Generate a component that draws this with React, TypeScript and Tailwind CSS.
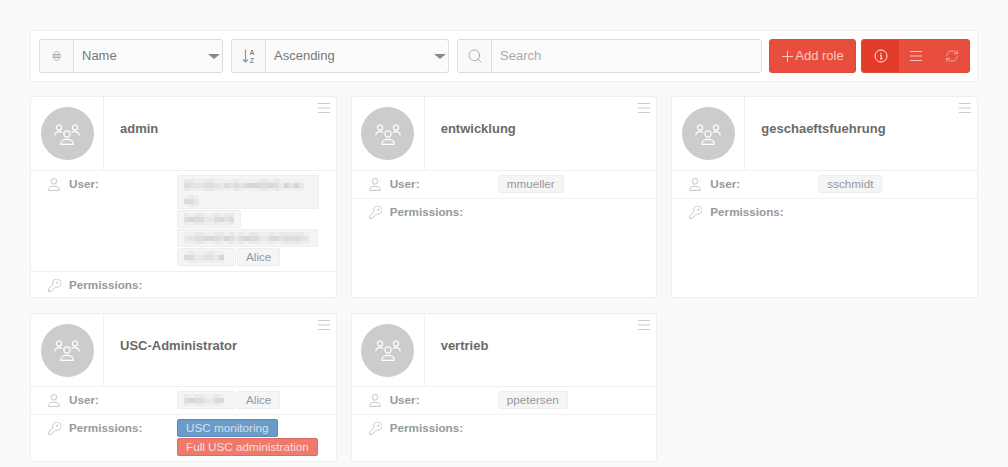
import type { ReactNode } from "react";
import { RefreshCw, Search } from "lucide-react";

interface Role {
  name: string;
  users: { label?: string; blur?: [number, number]; tall?: boolean }[];
  perms?: { label: string; tone: "blue" | "red" }[];
}

const ROLES: Role[] = [
  {
    name: "admin",
    users: [
      { blur: [142, 120], tall: true },
      { blur: [64, 50] },
      { blur: [141, 125] },
      { blur: [59, 44] },
      { label: "Alice" },
    ],
  },
  { name: "entwicklung", users: [{ label: "mmueller" }] },
  { name: "geschaeftsfuehrung", users: [{ label: "sschmidt" }] },
  {
    name: "USC-Administrator",
    users: [{ blur: [59, 44] }, { label: "Alice" }],
    perms: [
      { label: "USC monitoring", tone: "blue" },
      { label: "Full USC administration", tone: "red" },
    ],
  },
  { name: "vertrieb", users: [{ label: "ppetersen" }] },
];

// pixelated redaction bars, the source screenshot has blurred usernames here
function Pixels({ width, seed }: { width: number; seed: number }) {
  const cells = Math.floor(width / 5);
  const rects = [];
  for (let i = 0; i < cells; i++) {
    const v = (i * 37 + seed * 13 + (i * i) % 11) % 7;
    const mid = ["#dcdcdc", "#e4e4e4", "#d6d6d6", "#e2e2e2", "#dadada", "#e8e8e8", "#dedede"][v];
    const edge = v % 3 === 0 ? "#e9e9e9" : "#f0f0f0";
    rects.push(<rect key={`a${i}`} x={i * 5} y={0} width={5} height={4} fill={edge} />);
    rects.push(<rect key={`b${i}`} x={i * 5} y={4} width={5} height={5} fill={mid} />);
    rects.push(<rect key={`c${i}`} x={i * 5} y={9} width={5} height={3} fill={v % 2 ? "#eeeeee" : edge} />);
  }
  return (
    <svg width={cells * 5} height={12} className="block">
      {rects}
    </svg>
  );
}

function Blurred({ outer, inner, tall, seed }: { outer: number; inner: number; tall?: boolean; seed: number }) {
  return (
    <span
      className={`mr-px mb-px flex flex-col gap-1 rounded-[2px] border border-[#eeeeee] bg-[#f5f5f5] pl-[6px] ${tall ? "h-[34px] pt-[3px]" : "h-[18px] pt-[2px]"}`}
      style={{ width: outer }}
    >
      <Pixels width={inner} seed={seed} />
      {tall && <Pixels width={15} seed={seed + 3} />}
    </span>
  );
}

function Tag({ children }: { children: ReactNode }) {
  return (
    <span className="mr-px mb-px flex h-[18px] items-center rounded-[2px] border border-[#eeeeee] bg-[#f5f5f5] px-2 text-[11.7px] text-[#999999]">
      {children}
    </span>
  );
}

function Bars({ className }: { className: string }) {
  return (
    <svg width="12" height="10" viewBox="0 0 12 10" stroke="currentColor" strokeWidth="1" className={className}>
      <path d="M0 .5h12M0 5h12M0 9.500h12" />
    </svg>
  );
}

function GroupIcon() {
  return (
    <svg width="26" height="21" viewBox="0 0 26 21" fill="none" stroke="#ffffff" strokeWidth="1.200">
      <circle cx="13" cy="10" r="3.100" />
      <path d="M7 20.400h12v-1c0-2.500-2.700-4-6-4s-6 1.500-6 4z" />
      <circle cx="5" cy="3.500" r="2.600" />
      <circle cx="21" cy="3.500" r="2.600" />
      <path d="M.7 11.500c0-2.300 1.900-3.900 4.300-3.900 1.200 0 2.300.3 3.200 1" />
      <path d="M25.300 11.500c0-2.300-1.900-3.900-4.300-3.900-1.200 0-2.300.3-3.200 1" />
    </svg>
  );
}

function UserIcon() {
  return (
    <svg width="12" height="13" viewBox="0 0 12 13" fill="none" stroke="#c0c0c0" strokeWidth="0.9">
      <circle cx="6" cy="3.300" r="2.800" />
      <path d="M.7 12.400h10.600v-1c0-1.900-2.300-3.200-5.300-3.200S.7 9.500.7 11.400z" />
    </svg>
  );
}

function KeyIcon() {
  return (
    <svg width="13" height="13" viewBox="0 0 13 13" fill="none" stroke="#c0c0c0" strokeWidth="0.9">
      <path d="M5 5.800A4.200 4.200 0 1 1 7.300 8L3.100 12.400H.6V9.900z" />
      <circle cx="9.200" cy="3.700" r=".7" />
    </svg>
  );
}

function RoleCard({ role, index }: { role: Role; index: number }) {
  return (
    <div className="flex flex-col rounded-[3px] border border-[#eeeeee] bg-white">
      <div className={`relative flex shrink-0 border-b border-[#f0f0f0] ${index < 3 ? "h-[74px]" : "h-[73px]"}`}>
        <div className="flex w-[73px] shrink-0 items-center justify-center border-r border-[#f0f0f0]">
          <div className="flex h-[53px] w-[53px] items-center justify-center rounded-full bg-[#cccccc] pt-px">
            <GroupIcon />
          </div>
        </div>
        <div className="pt-[24px] pl-4 text-[13px] leading-[16px] font-bold text-[#6a6a6a]">{role.name}</div>
        <Bars className="absolute top-[6px] right-[6px] text-[#cccccc]" />
      </div>
      <div className="flex border-b border-[#f0f0f0] pt-[4px] pb-[4px]">
        <div className="flex h-[18px] w-[146px] shrink-0 items-center pl-[17px]">
          <span className="w-[21px]">
            <UserIcon />
          </span>
          <span className="text-[11.7px] font-bold text-[#999999]">User:</span>
        </div>
        <div className="flex w-[146px] flex-wrap">
          {role.users.map((u, i) =>
            u.blur ? (
              <Blurred key={i} outer={u.blur[0]} inner={u.blur[1]} tall={u.tall} seed={index * 5 + i} />
            ) : (
              <Tag key={i}>{u.label}</Tag>
            ),
          )}
        </div>
      </div>
      <div className="flex pt-[4px] pb-[3px]">
        <div className="flex h-[18px] w-[146px] shrink-0 items-center pl-[17px]">
          <span className="w-[21px]">
            <KeyIcon />
          </span>
          <span className="text-[11.7px] font-bold text-[#999999]">Permissions:</span>
        </div>
        {role.perms && (
          <div className="flex w-[146px] flex-wrap gap-y-px pb-[2px]">
            {role.perms.map((p) => (
              <span
                key={p.label}
                className={`flex h-[18px] items-center rounded-[2px] border px-2 text-[11.7px] ${
                  p.tone === "blue"
                    ? "border-[#5a8ab8] bg-[#6b9bc8] text-[#d3e2f0]"
                    : "border-[#e56a5e] bg-[#ee7a6e] text-[#fbdcd8]"
                }`}
              >
                {p.label}
              </span>
            ))}
          </div>
        )}
      </div>
    </div>
  );
}

function Addon({ children }: { children: ReactNode }) {
  return (
    <div className="flex w-[34px] shrink-0 items-center justify-center border-r border-[#dddddd] bg-[#f9f9f9]">
      {children}
    </div>
  );
}

function SortSelect({ width, value, icon }: { width: string; value: string; icon: ReactNode }) {
  return (
    <div className={`flex h-[34px] rounded-[3px] border border-[#dddddd] bg-[#fbfbfb] ${width}`}>
      <Addon>{icon}</Addon>
      <div className="relative flex flex-1 items-center pl-2 text-[13px] text-[#777777]">
        {value}
        <span className="absolute top-[14px] right-[2px] h-0 w-0 border-x-[6px] border-t-[5px] border-x-transparent border-t-[#888888]" />
      </div>
    </div>
  );
}

export default function App() {
  return (
    <div className="h-[467px] w-[1008px] overflow-hidden bg-[#f9f9f9] px-[30px] pt-[30px] font-['Liberation_Sans',Arial,sans-serif]">
      {/* toolbar */}
      <div className="flex h-[52px] items-center rounded-[3px] border border-[#eeeeee] bg-white pl-2">
        <SortSelect
          width="w-[184px]"
          value="Name"
          icon={
            <svg width="9" height="12" viewBox="0 0 9 12" fill="none" stroke="#b0a08c" strokeWidth="0.9">
              <path d="M1 4.500 4.500 1 8 4.500z" />
              <path d="M0 6h9" />
              <path d="M1 7.500 4.500 11 8 7.500z" stroke="#93a5b8" />
            </svg>
          }
        />
        <div className="ml-2">
          <SortSelect
            width="w-[218px]"
            value="Ascending"
            icon={
              <svg width="14" height="14" viewBox="0 0 14 14" fill="none" stroke="#7f93a8" strokeWidth="1.100">
                <path d="M3.500 .5v12.500M1 10.500 3.500 13 6 10.500" />
                <text x="7.500" y="6" fontSize="7" fill="#8c8676" stroke="none" fontWeight="bold">A</text>
                <text x="7.800" y="13.500" fontSize="7" fill="#7f93a8" stroke="none" fontWeight="bold">Z</text>
              </svg>
            }
          />
        </div>
        <div className="ml-2 flex h-[34px] w-[305px] rounded-[3px] border border-[#dddddd] bg-[#fbfbfb]">
          <Addon>
            <Search size={16} strokeWidth={1.2} className="text-[#9a9a9a]" />
          </Addon>
          <input
            placeholder="Search"
            className="min-w-0 flex-1 bg-transparent pl-2 text-[13px] outline-none placeholder:text-[#aaaaaa]"
          />
        </div>
        <button className="ml-[7px] flex h-[34px] w-[87px] items-center justify-center gap-[2px] rounded-[3px] border border-[#e0483a] bg-[#e84e3e] pl-px text-[13px] text-[#f8c8c2]">
          <svg width="11" height="11" viewBox="0 0 11 11" stroke="currentColor" strokeWidth="1">
            <path d="M5.500 0v11M0 5.500h11" />
          </svg>
          Add role
        </button>
        <div className="ml-[5px] flex h-[34px] w-[109px] overflow-hidden rounded-[3px] border border-[#e0483a] bg-[#e84e3e] text-[#f8c8c2]">
          <button className="flex w-[37px] items-center justify-center bg-[#e43a28] text-white">
            <svg width="14" height="14" viewBox="0 0 14 14" fill="none" stroke="currentColor">
              <circle cx="7" cy="7" r="6" strokeWidth="0.9" />
              <path d="M6 6.200h1.200v3.600M6 9.900h2.400M7 3.800v1.200" strokeWidth="1" />
            </svg>
          </button>
          <button className="flex w-[35px] items-center justify-center border-r border-[#e0483a]">
            <Bars className="" />
          </button>
          <button className="flex flex-1 items-center justify-center">
            <RefreshCw size={14} strokeWidth={1.2} />
          </button>
        </div>
      </div>
      {/* role cards */}
      <div className="mt-[14px] grid grid-cols-3 gap-x-[14px] gap-y-[15px]">
        {ROLES.map((r, i) => (
          <RoleCard key={r.name} role={r} index={i} />
        ))}
      </div>
    </div>
  );
}
